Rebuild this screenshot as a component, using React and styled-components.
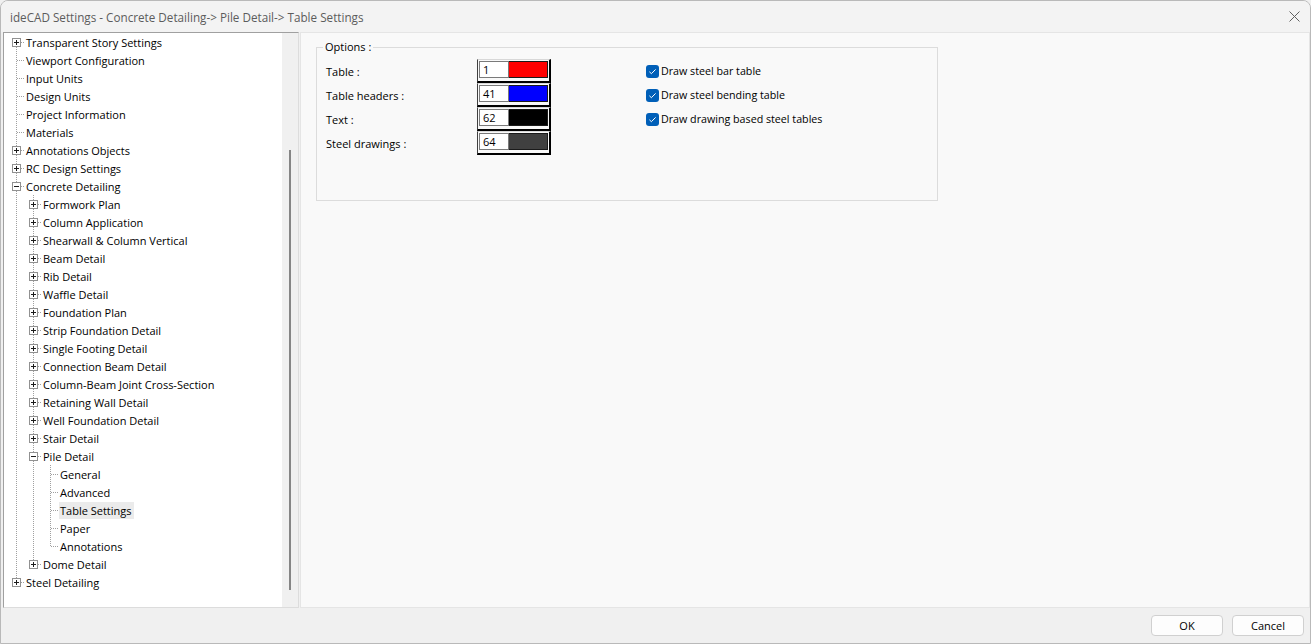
import React from 'react'
import styled, { createGlobalStyle } from 'styled-components'

const GlobalStyle = createGlobalStyle`
  html, body { margin: 0; padding: 0; }
  body {
    font-family: "Open Sans", "Noto Sans", sans-serif;
    font-size: 11px;
    color: #000;
    background: #f0f0f0;
  }
`

const Window = styled.div`
  width: 1311px;
  height: 644px;
  box-sizing: border-box;
  display: flex;
  flex-direction: column;
  background: #f0f0f0;
  border: 1px solid #b9b9b9;
  border-radius: 8px 8px 0 0;
  overflow: hidden;
`

const TitleBar = styled.div`
  height: 31px;
  flex: none;
  display: flex;
  align-items: center;
  justify-content: space-between;
  padding: 0 10px 0 9px;
  background: #f3f3f3;
  color: #5c5c5c;
  font-size: 11.7px;
`

const Body = styled.div`
  flex: 1;
  display: flex;
  gap: 1px;
  padding-left: 2px;
  min-height: 0;
`

const TreeBox = styled.div`
  width: 296px;
  box-sizing: border-box;
  display: flex;
  border-top: 1px solid #a0a0a0;
  border-left: 1px solid #a0a0a0;
  border-right: 1px solid #dcdcdc;
  border-bottom: 1px solid #dcdcdc;
`

const TreeList = styled.div`
  flex: 1;
  background: #fff;
  padding-left: 4px;
`

const Scrollbar = styled.div`
  width: 16px;
  flex: none;
  background: #f0f0f0;
`

const Thumb = styled.div`
  width: 2px;
  height: 440px;
  margin: 117px 0 0 7px;
  background: #858585;
`

const Row = styled.div`
  display: flex;
  align-items: center;
  height: 18px;
`

const Label = styled.span`
  padding: 0 2px 0 1px;
  line-height: 17px;
  white-space: nowrap;
  background: ${p => (p.$selected ? '#ebebeb' : 'transparent')};
`

const Panel = styled.div`
  flex: 1;
  background: #f9f9f9;
  border: 1px solid #e5e5e5;
  padding: 6px 0 0 15px;
`

const Group = styled.fieldset`
  margin: 0;
  width: 622px;
  height: 162px;
  box-sizing: border-box;
  border: 1px solid #dcdcdc;
  padding: 0 9px;
`

const Legend = styled.legend`
  padding: 0 2px;
  margin-left: -3px;
  line-height: 16px;
`

const Grid = styled.div`
  display: grid;
  grid-template-columns: 151px 74px 95px auto;
  grid-auto-rows: 24px;
  align-items: center;
  margin-top: 4px;
`

const ColorField = styled.div`
  display: flex;
  width: 74px;
  height: 24px;
  box-sizing: border-box;
  border-left: 1px solid #404040;
  border-top: 1px solid #d8d8d8;
  border-right: 2px solid #000;
  border-bottom: 2px solid #000;
  padding: 1px 1px 3px 1px;
`

const NumberBox = styled.div`
  width: 30px;
  box-sizing: border-box;
  border: 1px solid #7a7a7a;
  background: #fff;
  padding-left: 3px;
  line-height: 15px;
`

const Swatch = styled.div`
  flex: 1;
  border: 1px solid #1a1a1a;
  border-left: none;
  background: ${p => p.$color};
`

const Check = styled.label`
  display: flex;
  align-items: center;
  gap: 2px;
  white-space: nowrap;
  font-size: 10.7px;
`

const Footer = styled.div`
  height: 35px;
  flex: none;
  display: flex;
  align-items: center;
  justify-content: flex-end;
  gap: 9px;
  padding-right: 6px;
`

const Button = styled.button`
  width: 72px;
  height: 21px;
  border: 1px solid #d0d0d0;
  border-radius: 4px;
  background: #fdfdfd;
  font: inherit;
  color: #000;
  padding: 0;
`

const leaf = label => ({ label })
const closed = label => ({ label, children: [] })

const tree = [
  closed('Transparent Story Settings'),
  leaf('Viewport Configuration'),
  leaf('Input Units'),
  leaf('Design Units'),
  leaf('Project Information'),
  leaf('Materials'),
  closed('Annotations Objects'),
  closed('RC Design Settings'),
  {
    label: 'Concrete Detailing',
    open: true,
    children: [
      closed('Formwork Plan'),
      closed('Column Application'),
      closed('Shearwall & Column Vertical'),
      closed('Beam Detail'),
      closed('Rib Detail'),
      closed('Waffle Detail'),
      closed('Foundation Plan'),
      closed('Strip Foundation Detail'),
      closed('Single Footing Detail'),
      closed('Connection Beam Detail'),
      closed('Column-Beam Joint Cross-Section'),
      closed('Retaining Wall Detail'),
      closed('Well Foundation Detail'),
      closed('Stair Detail'),
      {
        label: 'Pile Detail',
        open: true,
        children: [
          leaf('General'),
          leaf('Advanced'),
          { label: 'Table Settings', selected: true },
          leaf('Paper'),
          leaf('Annotations'),
        ],
      },
      closed('Dome Detail'),
    ],
  },
  closed('Steel Detailing'),
]

function flatten(nodes, rails = [], out = []) {
  nodes.forEach((n, i) => {
    const hasNext = i < nodes.length - 1
    out.push({
      ...n,
      rails,
      hasNext,
      first: rails.length === 0 && i === 0,
      expander: n.children ? (n.open ? '-' : '+') : null,
    })
    if (n.open) flatten(n.children, [...rails, hasNext], out)
  })
  return out
}

const dot = { stroke: '#a0a0a0', strokeWidth: 1, strokeDasharray: '1 1' }

const RailCell = ({ on }) => (
  <svg width="17" height="18">
    {on && <line x1="8.5" y1="0" x2="8.5" y2="18" {...dot} />}
  </svg>
)

const OwnCell = ({ first, hasNext, expander }) => (
  <svg width="17" height="18">
    {!first && <line x1="8.5" y1="0" x2="8.5" y2="9" {...dot} />}
    {hasNext && <line x1="8.5" y1="10" x2="8.5" y2="18" {...dot} />}
    <line x1="9" y1="9.5" x2="17" y2="9.5" {...dot} />
    {expander && (
      <g>
        <rect x="4.5" y="5.5" width="8" height="8" fill="#fff" stroke="#919191" />
        <line x1="6" y1="9.5" x2="11" y2="9.5" stroke="#1c1c1c" />
        {expander === '+' && <line x1="8.5" y1="7" x2="8.5" y2="12" stroke="#1c1c1c" />}
      </g>
    )}
  </svg>
)

const CheckMark = () => (
  <svg width="13" height="13" viewBox="0 0 13 13">
    <rect x="0" y="0" width="13" height="13" rx="3" fill="#005fb8" />
    <path d="M3.4 6.8 L5.4 8.7 L9.6 4.4" fill="none" stroke="#fff" strokeWidth="1" />
  </svg>
)

const colorRows = [
  { label: 'Table :', value: '1', color: '#ff0000', check: 'Draw steel bar table' },
  { label: 'Table headers :', value: '41', color: '#0000ff', check: 'Draw steel bending table' },
  { label: 'Text :', value: '62', color: '#000000', check: 'Draw drawing based steel tables' },
  { label: 'Steel drawings :', value: '64', color: '#404040' },
]

export default function App() {
  const rows = flatten(tree)
  return (
    <>
      <GlobalStyle />
      <Window>
        <TitleBar>
          <span>ideCAD Settings - Concrete Detailing-&gt; Pile Detail-&gt; Table Settings</span>
          <svg width="11" height="11" viewBox="0 0 11 11">
            <path d="M0.5 0.5 L10.5 10.5 M10.5 0.5 L0.5 10.5" stroke="#606060" strokeWidth="1" />
          </svg>
        </TitleBar>
        <Body>
          <TreeBox>
            <TreeList>
              {rows.map((r, i) => (
                <Row key={i}>
                  {r.rails.map((on, j) => (
                    <RailCell key={j} on={on} />
                  ))}
                  <OwnCell first={r.first} hasNext={r.hasNext} expander={r.expander} />
                  <Label $selected={r.selected}>{r.label}</Label>
                </Row>
              ))}
            </TreeList>
            <Scrollbar>
              <Thumb />
            </Scrollbar>
          </TreeBox>
          <Panel>
            <Group>
              <Legend>Options :</Legend>
              <Grid>
                {colorRows.map(r => (
                  <React.Fragment key={r.label}>
                    <span>{r.label}</span>
                    <ColorField>
                      <NumberBox>{r.value}</NumberBox>
                      <Swatch $color={r.color} />
                    </ColorField>
                    <span />
                    {r.check ? (
                      <Check>
                        <CheckMark />
                        {r.check}
                      </Check>
                    ) : (
                      <span />
                    )}
                  </React.Fragment>
                ))}
              </Grid>
            </Group>
          </Panel>
        </Body>
        <Footer>
          <Button>OK</Button>
          <Button>Cancel</Button>
        </Footer>
      </Window>
    </>
  )
}
